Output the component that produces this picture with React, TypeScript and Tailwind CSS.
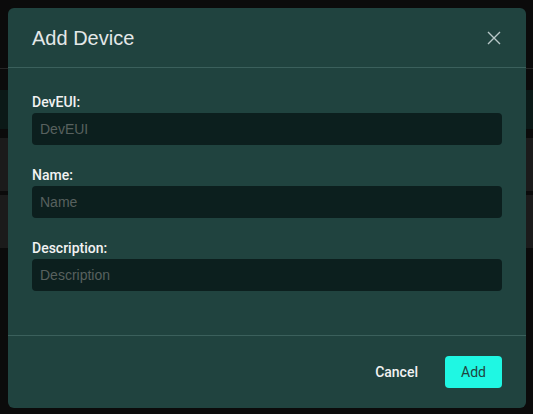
import React from "react";

function Field({ label }: { label: string }) {
  return (
    <div className="mb-5 flex flex-col">
      <label className="text-[14px] leading-[21px] font-medium text-[#f2f2f2] [font-family:Roboto,sans-serif]">
        {label}:
      </label>
      <input
        placeholder={label}
        className="h-8 w-full rounded-[4px] bg-[#0c1f1e] px-2 text-[14px] text-[#e0e0e0] outline-none placeholder:text-[#58615f] [font-family:'Liberation_Sans',Arial,sans-serif]"
      />
    </div>
  );
}

export default function App() {
  return (
    <div className="relative h-[414px] w-[533px] overflow-hidden bg-[#0b0b0b]">
      {/* underlying page, dimmed */}
      <div className="flex flex-col">
        <div className="h-[69px] border-b border-[#262626]" />
        <div className="h-[21px]" />
        <div className="h-[39px] bg-[#0b1917]" />
        <div className="h-[9px]" />
        <div className="h-[53px] bg-[#1b1b1b]" />
        <div className="h-[4px]" />
        <div className="h-[53px] bg-[#1b1b1b]" />
      </div>

      {/* modal */}
      <div className="absolute left-2 top-2 flex w-[518px] flex-col rounded-[6px] bg-[#20433f]">
        <div className="flex h-[60px] items-center justify-between border-b border-[#3b605c] px-6">
          <h2 className="text-[20px] text-[#e4e8e8] [font-family:'Liberation_Sans',Arial,sans-serif]">
            Add Device
          </h2>
          <svg width="14" height="14" viewBox="0 0 14 14" className="mr-[1px]">
            <path d="M1 1L13 13M13 1L1 13" stroke="#b8c8c8" strokeWidth="1.4" />
          </svg>
        </div>
        <div className="border-b border-[#3b605c] px-6 pt-6 pb-6">
          <Field label="DevEUI" />
          <Field label="Name" />
          <Field label="Description" />
        </div>
        <div className="flex items-center justify-end gap-[15px] px-6 py-5">
          <button className="px-3 text-[14px] font-medium text-[#f2f2f2] [font-family:Roboto,sans-serif]">
            Cancel
          </button>
          <button className="h-8 w-[57px] rounded-[4px] bg-[#1ff7e3] text-[14px] text-[#1f4340] [font-family:Roboto,sans-serif]">
            Add
          </button>
        </div>
      </div>
    </div>
  );
}
